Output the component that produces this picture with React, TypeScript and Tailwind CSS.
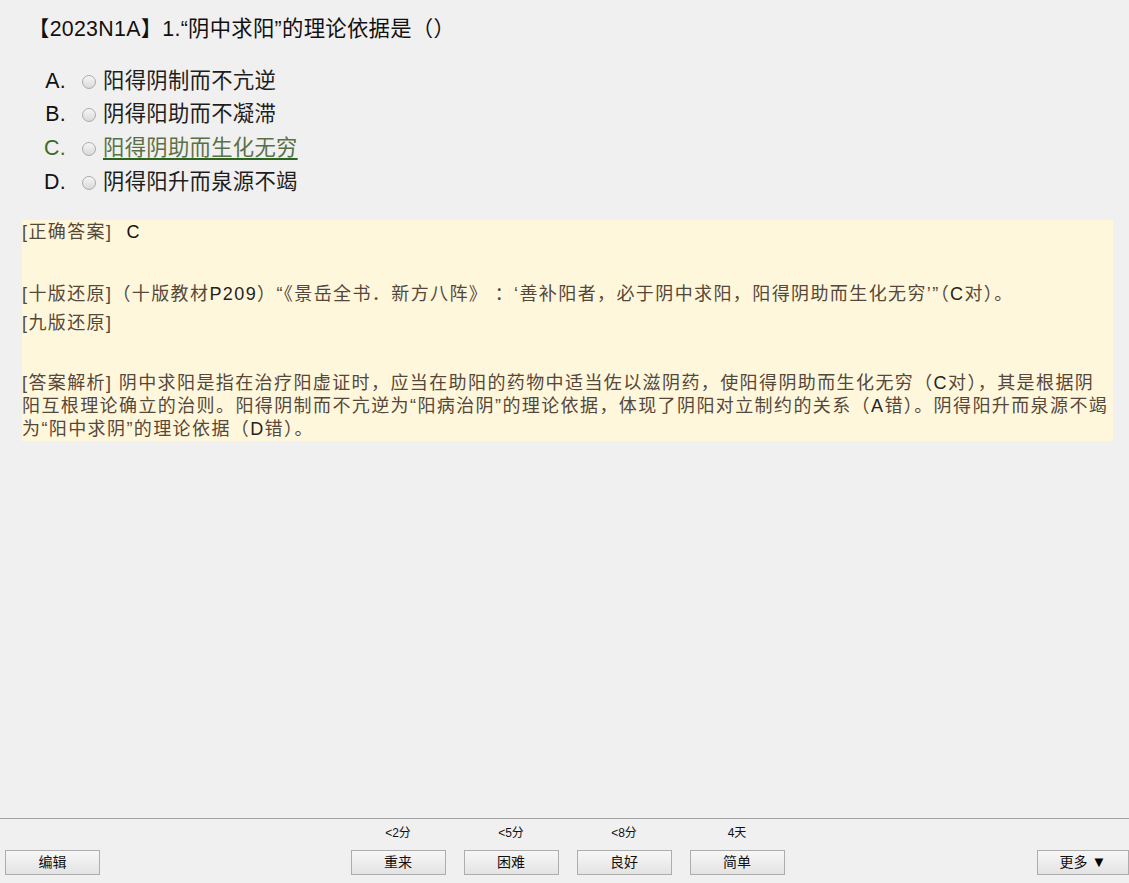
import React from "react";

const SANS = "font-['Liberation_Sans','Noto_Sans_CJK_SC',sans-serif]";

function Radio() {
  return (
    <span className="inline-block w-[14px] h-[14px] rounded-full border border-[#ababab] bg-gradient-to-b from-[#f6f6f6] to-[#d9d9d9] shrink-0" />
  );
}

function Option({ letter, text, correct }: { letter: string; text: string; correct?: boolean }) {
  return (
    <div className="flex items-center h-[33.67px]">
      <span className={`w-[44px] text-right ${correct ? "text-[#3c6a25]" : "text-[#111]"}`}>{letter}.</span>
      <span className="ml-[16px] mr-[7px] flex items-center"><Radio /></span>
      <span
        className={
          correct
            ? "text-[#5b7048] underline decoration-[#2b661d] decoration-2 underline-offset-[3px]"
            : "text-[#1e1e1e]"
        }
      >
        {text}
      </span>
    </div>
  );
}

function Btn({ children, w = "w-[95px]" }: { children: React.ReactNode; w?: string }) {
  return (
    <div
      className={`${w} h-[25px] border border-[#adadad] bg-gradient-to-b from-[#f7f7f7] to-[#e3e3e3] flex items-center justify-center text-[14px] text-[#111]`}
    >
      {children}
    </div>
  );
}

function Col({ label, btn }: { label: string; btn: string }) {
  return (
    <div className="flex flex-col items-center w-[95px]">
      <div className="mt-[7px] h-[14px] leading-[14px] text-[12px] text-[#111]">{label}</div>
      <div className="mt-[10px]">
        <Btn>{btn}</Btn>
      </div>
    </div>
  );
}

export default function App() {
  return (
    <div className={`w-[1129px] h-[883px] bg-[#f0f0f0] flex flex-col overflow-hidden ${SANS}`}>
      <main className="flex-1 pl-[22px] pr-[16px] pt-[14px]">
        <div className="pl-[6px] text-[21.33px] tracking-[0.3px] leading-[30px] text-[#111]">
          【2023N1A】1.“阴中求阳”的理论依据是（）
        </div>
        <div className="mt-[21px] text-[21.33px] tracking-[0.3px]">
          <Option letter="A" text="阳得阴制而不亢逆" />
          <Option letter="B" text="阴得阳助而不凝滞" />
          <Option letter="C" text="阳得阴助而生化无穷" correct />
          <Option letter="D" text="阴得阳升而泉源不竭" />
        </div>
        <div className="mt-[20px] bg-[#fff7dc] h-[221px] text-[18px] tracking-[1.4px] text-[#55483a] leading-[23px]">
          <div className="h-[24px] leading-[24px] whitespace-nowrap">
            [正确答案]<span className="ml-[14px] text-[#111]">C</span>
          </div>
          <div className="mt-[38px] h-[24px] leading-[24px] whitespace-nowrap">
            [十版还原]（十版教材<span className="text-[#222]">P209</span>）“《景岳全书．新方八阵》 ：‘善补阳者，必于阴中求阳，阳得阴助而生化无穷’”（<span className="text-[#222]">C</span>对）。
          </div>
          <div className="mt-[5px] h-[24px] leading-[24px] whitespace-nowrap">[九版还原]</div>
          <div className="mt-[37px]">
            <div className="whitespace-nowrap">
              [答案解析] 阴中求阳是指在治疗阳虚证时，应当在助阳的药物中适当佐以滋阴药，使阳得阴助而生化无穷（<span className="text-[#222]">C</span>对），其是根据阴
            </div>
            <div className="whitespace-nowrap">
              阳互根理论确立的治则。阳得阴制而不亢逆为“阳病治阴”的理论依据，体现了阴阳对立制约的关系（<span className="text-[#222]">A</span>错）。阴得阳升而泉源不竭
            </div>
            <div className="whitespace-nowrap">
              为“阳中求阴”的理论依据（<span className="text-[#222]">D</span>错）。
            </div>
          </div>
        </div>
      </main>
      <footer className="h-[65px] border-t border-[#a3a3a3] flex items-start justify-between">
        <div className="ml-[5px] mt-[31px]">
          <Btn>编辑</Btn>
        </div>
        <div className="flex gap-[18px] ml-[-2px]">
          <Col label="<2分" btn="重来" />
          <Col label="<5分" btn="困难" />
          <Col label="<8分" btn="良好" />
          <Col label="4天" btn="简单" />
        </div>
        <div className="mt-[31px]">
          <Btn w="w-[92px]">
            更多 <span className="ml-[4px] text-[15px] text-black">▼</span>
          </Btn>
        </div>
      </footer>
    </div>
  );
}
